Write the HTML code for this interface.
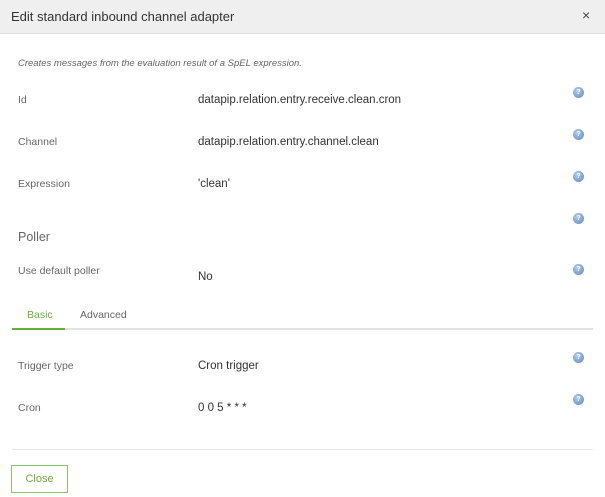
<!DOCTYPE html>
<html><head><meta charset="utf-8"><style>
*{margin:0;padding:0;box-sizing:border-box}
body{width:605px;height:497px;background:#fff;font-family:"Liberation Sans",sans-serif;position:relative;overflow:hidden;color:#333}
.a{position:absolute;white-space:nowrap}
.hdr{position:absolute;left:0;top:0;width:605px;height:34px;background:#efefef;border-bottom:1px solid #e0e0e0}
.lbl{font-size:10.5px;color:#666}
.val{font-size:11.5px;color:#333}
.q{position:absolute;left:573px;width:11px;height:11px;border-radius:50%;background:radial-gradient(circle at 40% 35%,#b5cdea,#5b86bf);}
.q::after{content:"?";position:absolute;left:0;top:0;width:11px;line-height:11px;text-align:center;color:#fff;font-size:7px;font-weight:bold}
</style></head><body>
<div class="hdr"></div>
<div class="a" style="left:11px;top:9px;font-size:13px;color:#333">Edit standard inbound channel adapter</div>
<div class="a" style="left:582px;top:7px;font-size:14px;color:#444">×</div>
<div class="a" style="left:18px;top:58px;font-size:9.5px;font-style:italic;color:#666">Creates messages from the evaluation result of a SpEL expression.</div>

<div class="a lbl" style="left:18px;top:94px">Id</div>
<div class="a val" style="left:198px;top:94px">datapip.relation.entry.receive.clean.cron</div>
<div class="q" style="top:87px"></div>

<div class="a lbl" style="left:18px;top:136px">Channel</div>
<div class="a val" style="left:198px;top:136px">datapip.relation.entry.channel.clean</div>
<div class="q" style="top:129px"></div>

<div class="a lbl" style="left:18px;top:178px">Expression</div>
<div class="a val" style="left:198px;top:178px">'clean'</div>
<div class="q" style="top:171px"></div>

<div class="q" style="top:213px"></div>
<div class="a" style="left:18px;top:230px;font-size:12.5px;color:#666">Poller</div>

<div class="a lbl" style="left:18px;top:265px">Use default poller</div>
<div class="a val" style="left:198px;top:271px">No</div>
<div class="q" style="top:264px"></div>

<div class="a" style="left:27px;top:309px;font-size:10.5px;color:#6aae3a">Basic</div>
<div class="a" style="left:80px;top:309px;font-size:10.5px;color:#666">Advanced</div>
<div class="a" style="left:12px;top:328px;width:581px;height:2px;background:#e2e2e2"></div>
<div class="a" style="left:12px;top:328px;width:53px;height:2px;background:#6aae3a"></div>

<div class="a lbl" style="left:18px;top:360px">Trigger type</div>
<div class="a val" style="left:198px;top:360px">Cron trigger</div>
<div class="q" style="top:352px"></div>

<div class="a lbl" style="left:18px;top:402px">Cron</div>
<div class="a val" style="left:198px;top:402px">0 0 5 * * *</div>
<div class="q" style="top:394px"></div>

<div class="a" style="left:12px;top:449px;width:581px;height:1px;background:#e6e6e6"></div>
<div class="a" style="left:11px;top:465px;width:57px;height:28px;border:1px solid #8cc46a;color:#6aae3a;font-size:11px;text-align:center;line-height:26px">Close</div>
</body></html>
